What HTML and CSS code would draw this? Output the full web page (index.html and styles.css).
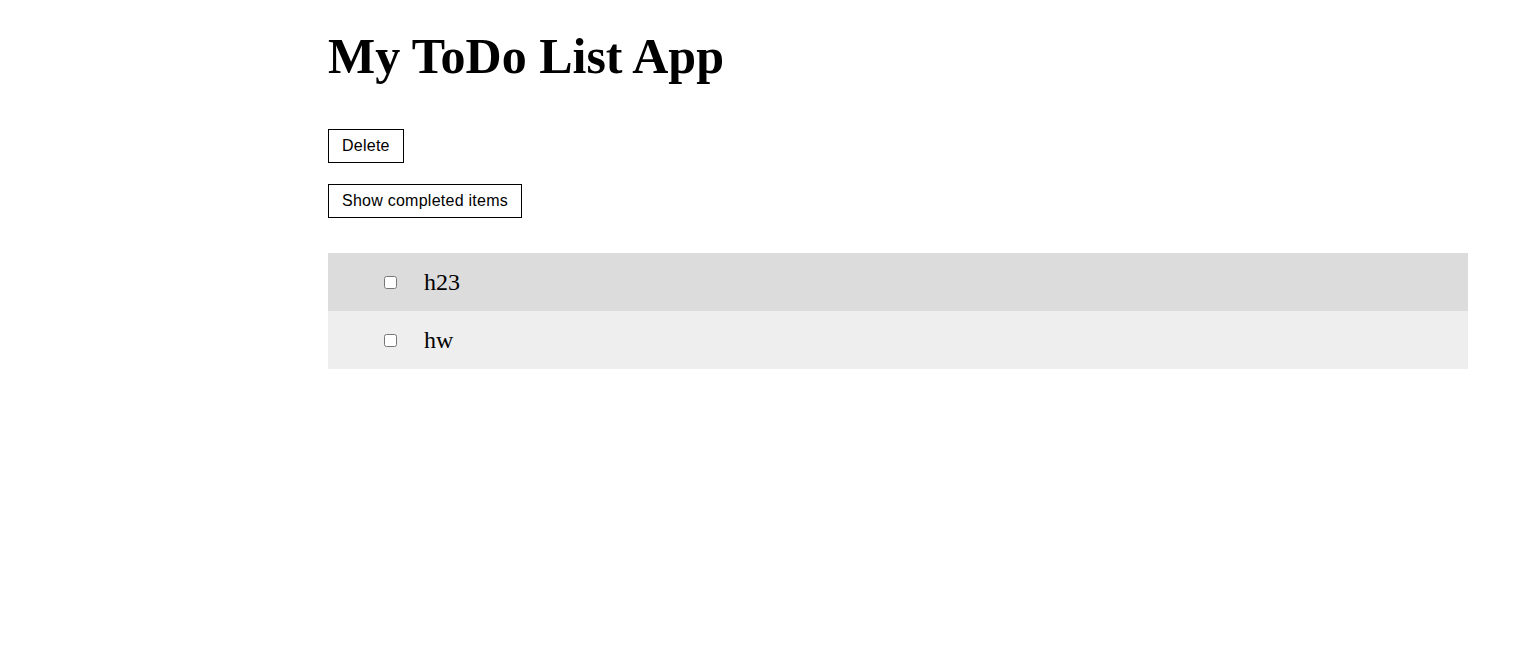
FILE: index.html
```html
<!DOCTYPE html>
<html>
<head>
<meta charset="utf-8">
<title>My ToDo List App</title>
<link rel="stylesheet" href="styles.css">
</head>
<body>
<div class="app">
  <h1 class="title">My ToDo List App</h1>
  <div class="actions">
    <button class="btn">Delete</button>
    <button class="btn">Show completed items</button>
  </div>
  <ul class="list">
    <li class="item item-odd"><input type="checkbox" class="check"><span class="label">h23</span></li>
    <li class="item item-even"><input type="checkbox" class="check"><span class="label">hw</span></li>
  </ul>
</div>
</body>
</html>
```

FILE: styles.css
```css
html, body {
  margin: 0;
  padding: 0;
  background: #ffffff;
}
body {
  font-family: "Liberation Serif", "Times New Roman", serif;
  color: #000;
}
.app {
  margin-left: 328px;
  width: 1140px;
  padding-top: 1px;
}
.title {
  font-family: "Liberation Serif", "Times New Roman", serif;
  font-weight: bold;
  font-size: 50px;
  margin: 27px 0 0 0;
  line-height: 57px;
}
.actions {
  display: flex;
  flex-direction: column;
  align-items: flex-start;
  gap: 21px;
  margin-top: 44px;
}
.btn {
  font-family: "Liberation Sans", Arial, sans-serif;
  font-size: 16px;
  line-height: 18px;
  letter-spacing: 0.25px;
  color: #000;
  background: #fff;
  border: 1px solid #000;
  border-radius: 0;
  padding: 7px 13px 7px 13px;
  margin: 0;
}
.list {
  list-style: none;
  margin: 35px 0 0 0;
  padding: 0;
}
.item {
  display: flex;
  align-items: center;
  height: 58px;
  padding-left: 52px;
  box-sizing: border-box;
}
.item-odd { background: #dcdcdc; }
.item-even { background: #eeeeee; }
.check {
  width: 13px;
  height: 13px;
  margin: 0 0 0 4px;
}
.label {
  font-size: 24px;
  margin-left: 27px;
}
```
